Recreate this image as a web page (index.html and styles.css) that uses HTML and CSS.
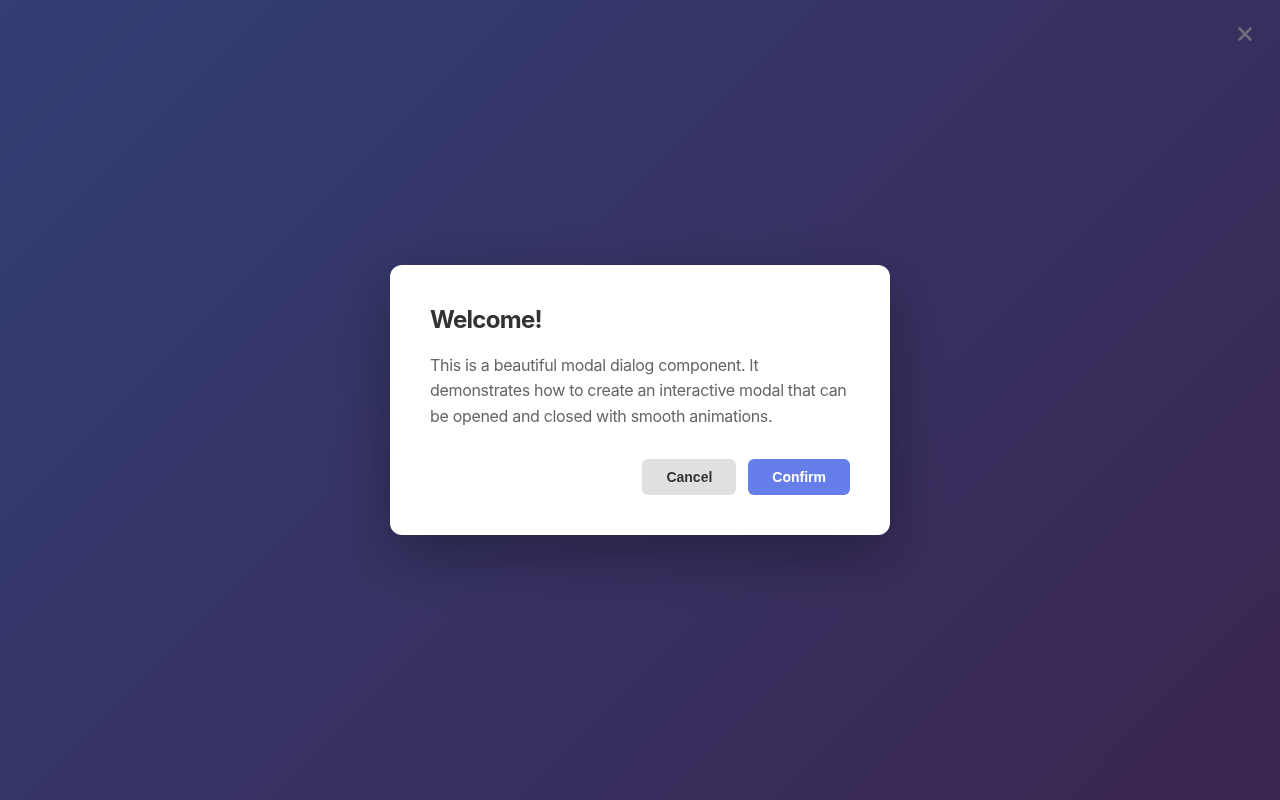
FILE: index.html
```html
<!DOCTYPE html>
<html lang="en">
<head>
<meta charset="utf-8">
<title>Modal</title>
<link rel="stylesheet" href="styles.css">
</head>
<body>
<div class="overlay">
  <button class="close" aria-label="Close">
    <svg width="14" height="14" viewBox="0 0 14 14"><path d="M1.5 1.5 L12.5 12.5 M12.5 1.5 L1.5 12.5" stroke="currentColor" stroke-width="2.6" stroke-linecap="round" fill="none"/></svg>
  </button>
  <div class="modal">
    <h2 class="title">Welcome!</h2>
    <p class="text">This is a beautiful modal dialog component. It demonstrates how to create an interactive modal that can be opened and closed with smooth animations.</p>
    <div class="actions">
      <button class="btn btn-cancel">Cancel</button>
      <button class="btn btn-confirm">Confirm</button>
    </div>
  </div>
</div>
</body>
</html>
```
FILE: styles.css
```css
html, body {
  margin: 0;
  height: 100%;
}
body {
  background: linear-gradient(135deg, #667eea 0%, #764ba2 100%);
  font-family: Inter, "Noto Sans", sans-serif;
}
.overlay {
  position: fixed;
  inset: 0;
  background: rgba(0, 0, 0, 0.5);
  display: flex;
  align-items: center;
  justify-content: center;
}
.close {
  position: absolute;
  top: 27px;
  right: 28px;
  width: 14px;
  height: 14px;
  padding: 0;
  border: 0;
  background: none;
  color: #6c6c7a;
  display: flex;
}
.modal {
  width: 500px;
  box-sizing: border-box;
  padding: 40px;
  background: #fff;
  border-radius: 12px;
  box-shadow: 0 20px 60px rgba(0, 0, 0, 0.3);
}
.title {
  margin: 0 0 18.5px;
  font-size: 24px;
  font-weight: 700;
  color: #333;
  line-height: 1.21;
  letter-spacing: -0.03em;
}
.text {
  margin: 0 0 29.5px;
  font-size: 16px;
  line-height: 1.6;
  color: #666;
  letter-spacing: -0.02em;
}
.actions {
  display: flex;
  justify-content: flex-end;
  gap: 12px;
}
.btn {
  font-family: "Liberation Sans", Arial, sans-serif;
  font-size: 14px;
  font-weight: 700;
  line-height: 16px;
  padding: 10px 24px;
  border: 0;
  border-radius: 6px;
}
.btn-cancel {
  background: #e0e0e0;
  color: #333;
}
.btn-confirm {
  background: #667eea;
  color: #fff;
}
```
